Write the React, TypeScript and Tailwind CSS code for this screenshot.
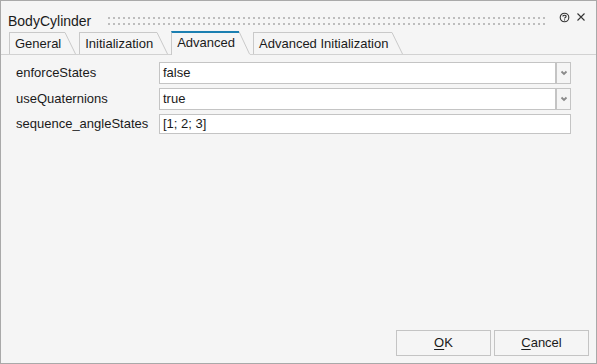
import clsx from "clsx";
import type { ReactNode } from "react";

const tabs = [
  { label: "General", active: false },
  { label: "Initialization", active: false },
  { label: "Advanced", active: true },
  { label: "Advanced Initialization", active: false }
];

function Tab({ label, active }: { label: string; active: boolean }) {
  const h = active ? 24 : 22;
  return (
    <div className={clsx("flex shrink-0", active ? "relative z-10 h-[24px]" : "mt-[1px] h-[22px]")}>
      <div
        className={clsx(
          "flex items-center border-l border-[#c9c9c9] pl-[5px] pr-[4px] text-[13px] leading-[16px]",
          active ? "border-t-2 border-t-[#1b7fb1] bg-[#f5f5f5] pb-[3px]" : "border-t pt-[1px]"
        )}
      >
        {label}
      </div>
      <svg width="11" height={h} className="shrink-0">
        {active ? <polygon points={`0,0 11,${h} 0,${h}`} fill="#f5f5f5" /> : null}
        <line x1="0" y1="0.5" x2="10.5" y2={h - (active ? 1 : 0)} stroke="#c9c9c9" strokeWidth="1" />
      </svg>
    </div>
  );
}

function Row({ label, children, tall = true }: { label: string; children: ReactNode; tall?: boolean }) {
  return (
    <div className={clsx("flex items-center", tall ? "h-[22px]" : "h-[20px]")}>
      <div className="w-[143px] shrink-0 text-[13px] leading-[16px]">{label}</div>
      {children}
    </div>
  );
}

function Combo({ value }: { value: string }) {
  return (
    <div className="flex h-[22px] flex-1">
      <div className="flex flex-1 items-center border border-[#c4c4c4] bg-white pl-[3px] text-[13px] leading-[16px]">{value}</div>
      <div className="flex w-[15px] items-center justify-center border border-[#c4c4c4] bg-[#f5f5f5]">
        <svg width="8" height="6" viewBox="0 0 8 6">
          <path d="M1.5 1.5 L4 4 L6.5 1.5" fill="none" stroke="#8a8a8a" strokeWidth="1.8" />
        </svg>
      </div>
    </div>
  );
}

export default function App() {
  return (
    <div className="flex h-[364px] w-[597px] flex-col border border-[#a9a9a9] bg-[#f5f5f5] font-['Liberation_Sans',Arial,sans-serif] text-[#1a1a1a]">
      <header className="flex h-[30px] shrink-0 items-start pl-[7px] pr-[10px]">
        <span className="mt-[12px] text-[14px] leading-[16px]">BodyCylinder</span>
        <svg className="ml-[17px] mt-[15px] h-[9px] flex-1">
          <defs>
            <pattern id="grip" width="5" height="6" patternUnits="userSpaceOnUse">
              <rect x="0" y="1" width="2" height="2" fill="#bdbdbd" />
            </pattern>
          </defs>
          <rect width="100%" height="9" fill="url(#grip)" />
        </svg>
        <svg className="ml-[12px] mt-[11px]" width="11" height="11" viewBox="0 0 11 11">
          <circle cx="5.5" cy="5.5" r="4.3" fill="none" stroke="#333" strokeWidth="1.1" />
          <path d="M3.9 4.4 C3.9 2.9 7.1 2.9 7.1 4.4 C7.1 5.5 5.5 5.4 5.5 6.6" fill="none" stroke="#333" strokeWidth="1.1" />
          <rect x="5" y="7.4" width="1.1" height="1.1" fill="#333" />
        </svg>
        <svg className="ml-[6px] mt-[11px]" width="10" height="10" viewBox="0 0 10 10">
          <path d="M1.5 1.5 L8.5 8.5 M8.5 1.5 L1.5 8.5" stroke="#333" strokeWidth="1.1" />
        </svg>
      </header>

      <div className="flex h-[24px] shrink-0 items-start gap-[3px] border-b border-[#d2d2d2] pl-[8px]">
        {tabs.map((tab) => (
          <Tab key={tab.label} label={tab.label} active={tab.active} />
        ))}
      </div>

      <div className="flex flex-col gap-[4px] pl-[15px] pr-[25px] pt-[7px]">
        <Row label="enforceStates">
          <Combo value="false" />
        </Row>
        <Row label="useQuaternions">
          <Combo value="true" />
        </Row>
        <Row label="sequence_angleStates" tall={false}>
          <div className="flex h-[20px] flex-1 items-center border border-[#c4c4c4] bg-white pl-[3px] text-[13px] leading-[16px]">
            [1; 2; 3]
          </div>
        </Row>
      </div>

      <div className="mt-auto flex justify-end gap-[3px] pb-[7px] pr-[7px]">
        <button type="button" className="h-[26px] w-[95px] border border-[#c4c4c4] bg-[#f5f5f5] text-[13px]">
          <span className="underline underline-offset-2">O</span>K
        </button>
        <button type="button" className="h-[26px] w-[95px] border border-[#c4c4c4] bg-[#f5f5f5] text-[13px]">
          <span className="underline underline-offset-2">C</span>ancel
        </button>
      </div>
    </div>
  );
}
